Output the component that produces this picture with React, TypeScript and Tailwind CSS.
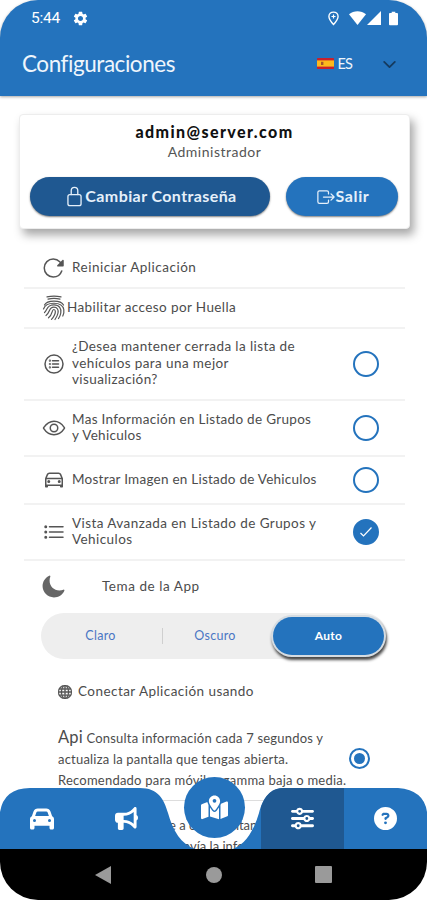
import type { ReactNode } from "react";
import {
    IoCarOutline,
    IoChevronDown,
    IoExitOutline,
    IoEyeOutline,
    IoListCircleOutline,
    IoListOutline,
    IoLockClosedOutline,
    IoMoon,
    IoReload,
} from "react-icons/io5";
import {
    FaBullhorn,
    FaCar,
    FaCircleQuestion,
    FaMapLocationDot,
    FaSliders,
} from "react-icons/fa6";
import { MdSettings } from "react-icons/md";
import { BsGlobe } from "react-icons/bs";

interface SettingRowProps {
    icon: ReactNode;
    lines: string[];
    height: string;
    textClass?: string;
    checked?: boolean;
}

const FingerprintIcon = () => (
    <svg
        viewBox="0 0 24 26"
        className="h-[26px] w-6"
        fill="none"
        stroke="currentColor"
        strokeWidth="1.2"
        strokeLinecap="round"
    >
        <path d="M5 1.8Q12 .6 19 1.8M6 4.2Q12 2.6 18 4.2" />
        <path d="M2.5 10C5 4.800 19 4.800 21.500 10" />
        <path d="M1.500 14C4 6.500 20 6 21.800 14.500C22.200 17 21.800 19 20.800 21" />
        <path d="M2.500 17.500C5.500 15 4.500 9.800 12 9.800C17.500 9.800 19.500 14 18.800 18C18.400 20.500 17.500 22 16.500 23.500" />
        <path d="M4 20.500C8.500 17.500 6.500 12.200 11.800 12.200C15.500 12.200 16.600 15 16 18C15.400 21 14.500 22.500 13 24.500" />
        <path d="M6.500 22.800C11 19.500 9.500 14.500 11.800 14.500C14 14.500 13.500 18 12.500 20C11.600 22 10.600 23.200 9.500 24.300" />
    </svg>
);

const CheckCircle = ({ checked }: { checked: boolean }) => (
    <div
        className={`flex h-[26px] w-[26px] shrink-0 items-center justify-center rounded-full border-2 border-[#2473bd] ${
            checked ? "bg-[#2473bd]" : "bg-white"
        }`}
    >
        {checked && (
            <svg viewBox="0 0 14 12" className="h-3 w-3.5" fill="none">
                <path d="M1.5 7 4.5 10 12.5 1.5" stroke="#fff" strokeWidth="1.2" />
            </svg>
        )}
    </div>
);

const SettingRow = ({
    icon,
    lines,
    height,
    textClass = "",
    checked,
}: SettingRowProps) => (
    <div
        className={`flex items-center border-b-2 border-[#f2f2f2] pl-[18px] pr-[26px] ${height}`}
    >
        <div className="flex w-[30px] shrink-0 items-center text-[#555]">
            {icon}
        </div>
        <div
            className={`flex-1 whitespace-nowrap pb-0.5 text-[13.5px] leading-[16.5px] ${textClass}`}
        >
            {lines.map((line) => (
                <div key={line}>{line}</div>
            ))}
        </div>
        {checked !== undefined && <CheckCircle checked={checked} />}
    </div>
);

const StatusBar = () => (
    <div className="flex h-9 items-center justify-between pl-[31px] pr-[29px] text-white">
        <div className="flex items-center gap-3">
            <span className="pt-0.5 font-[Roboto] text-[15.5px] tracking-[-0.2px]">
                5:44
            </span>
            <MdSettings size={17} />
        </div>
        <div className="flex items-center">
            <svg viewBox="0 0 12 16" className="mr-2.5 h-[15px] w-[11px]" fill="none">
                <path
                    d="M6 1C3.1 1 1 3.1 1 5.8 1 9.2 6 14.5 6 14.5S11 9.2 11 5.8C11 3.1 8.9 1 6 1Z"
                    stroke="#fff"
                    strokeWidth="1.5"
                />
                <path d="M6 3.6V8M3.8 5.8H8.2" stroke="#fff" strokeWidth="1.3" />
            </svg>
            <svg viewBox="0 0 17 14" className="h-3.5 w-[17px]" fill="#fff">
                <path d="M0 3.3C4.8-.9 12.2-.9 17 3.3L8.5 14Z" />
            </svg>
            <svg viewBox="0 0 14 14" className="ml-px h-3.5 w-3.5" fill="#fff">
                <path d="M14 0V14H0Z" />
            </svg>
            <svg viewBox="0 0 10 15" className="ml-2 h-[15px] w-[9px]" fill="#fff">
                <path d="M3 0H7V1.5H9Q10 1.5 10 2.5V14Q10 15 9 15H1Q0 15 0 14V2.5Q0 1.5 1 1.5H3Z" />
            </svg>
        </div>
    </div>
);

const SpainFlag = () => (
    <svg viewBox="0 0 17 11" className="mb-0.5 h-[11px] w-[17px]">
        <rect width="17" height="11" rx="0.8" fill="#c8202c" />
        <rect y="2.4" width="17" height="6.2" fill="#fcb91c" />
        <rect x="4" y="3.8" width="2.4" height="3.2" fill="#a5562a" />
    </svg>
);

const Header = () => (
    <header className="h-24 rounded-t-[38px] bg-[#2473bd] shadow-[0_1px_3px_rgba(0,0,0,0.35)]">
        <StatusBar />
        <div className="flex h-14 items-center pl-[22px] pr-7">
            <h1 className="flex-1 text-[22.5px] tracking-[-0.45px] text-[#eef5fc]">
                Configuraciones
            </h1>
            <SpainFlag />
            <span className="ml-1 text-[14.5px] tracking-[-0.9px] text-[#eef5fc]">
                ES
            </span>
            <IoChevronDown size={19} className="ml-7 text-[#153a5e]" />
        </div>
    </header>
);

const AccountCard = () => (
    <section className="ml-[19px] mt-[18px] flex h-[115px] w-[391px] flex-col items-center rounded-[4px] border border-[#ededed] bg-white pt-1.5 shadow-[4px_6px_10px_rgba(0,0,0,0.35)]">
        <div className="text-[16px] font-black leading-[22px] tracking-[1.4px] text-[#111]">
            admin@server.com
        </div>
        <div className="text-[14px] leading-[18px] tracking-[0.5px] text-[#555]">
            Administrador
        </div>
        <div className="mr-0.5 mt-4 flex gap-4">
            <button
                type="button"
                className="flex h-[39px] w-[240px] items-center justify-center rounded-full bg-[#1f5891] pb-0.5 pl-0.5 text-[16px] font-bold tracking-[0.4px] text-[#e6f0fa] shadow-[0_1px_2px_rgba(0,0,0,0.5)]"
            >
                <IoLockClosedOutline size={21} className="mt-0.5" />
                Cambiar Contraseña
            </button>
            <button
                type="button"
                className="flex h-[39px] w-[112px] items-center justify-center rounded-full bg-[#2473bd] pb-0.5 pl-0.5 text-[16px] font-bold tracking-[0.6px] text-[#e6f0fa] shadow-[0_1px_2px_rgba(0,0,0,0.5)]"
            >
                <IoExitOutline size={20} className="mt-0.5" />
                Salir
            </button>
        </div>
    </section>
);

const ThemePicker = () => (
    <section>
        <div className="flex h-[52px] items-center pb-0.5 pl-[41px]">
            <IoMoon size={25} className="text-[#666]" />
            <span className="ml-9 text-[13.5px] tracking-[0.55px]">Tema de la App</span>
        </div>
        <div className="ml-[41px] flex h-[46px] w-[346px] items-center rounded-full bg-[#eeeeee] text-[12.5px] tracking-[0.3px] text-[#4a76c4]">
            <div className="w-[119px] text-center">Claro</div>
            <div className="ml-0.5 h-4 w-px bg-[#cfcfcf]" />
            <div className="w-[104px] text-center">Oscuro</div>
            <div className="ml-[6px] flex h-[38px] w-[111px] items-center justify-center rounded-full bg-[#2473bd] text-[12px] font-bold text-white shadow-[0_0_0_2px_#d5dce2,1px_3px_3px_2px_rgba(0,0,0,0.7)]">
                Auto
            </div>
        </div>
    </section>
);

const ConnectionPicker = () => (
    <section className="pl-[58px]">
        <div className="flex h-[66px] items-center gap-1.5">
            <BsGlobe size={14} strokeWidth={0.5} />
            <span className="pb-0.5 text-[13.5px] tracking-[0.45px]">
                Conectar Aplicación usando
            </span>
        </div>
        <div className="flex h-[66px] items-center">
            <div className="w-[291px] whitespace-nowrap pt-0.5 text-[13px] leading-[21px]">
                <div className="tracking-[0.2px]">
                    <span className="text-[16.5px]">Api</span> Consulta información cada 7
                    segundos y
                </div>
                <div className="tracking-[0.2px]">
                    actualiza la pantalla que tengas abierta.
                </div>
                <div className="tracking-[0.22px]">
                    Recomendado para móviles gamma baja o media.
                </div>
            </div>
            <div className="flex h-[21px] w-[21px] items-center justify-center rounded-full border-2 border-[#2473bd]">
                <div className="h-[11px] w-[11px] rounded-full bg-[#2473bd]" />
            </div>
        </div>
        <div className="mr-[22px] mt-[9px] whitespace-nowrap border-t border-[#ddd] pt-[14px] text-[13px] leading-[21px]">
            <div className="pl-[111px]">e a cada ventana</div>
            <div className="pl-[118px]">envía la información</div>
        </div>
    </section>
);

const TabBar = () => (
    <nav className="absolute inset-x-0 bottom-[51px] h-[61px] text-white">
        {/* bar outline with the notch around the round map button */}
        <svg viewBox="0 0 427 61" className="absolute inset-0 h-[61px] w-full">
            <path
                d="M0 61V24Q4 0 30 0H140C158 0 164 11 168 25C173 43 181 56 195 61H233C246 56 254 42 259 25C263 10 270 0 284 0H398Q424 2 427 24V61Z"
                fill="#2473bd"
            />
            <path
                d="M261 61V19C265 7 272 0 284 0H344V61Z"
                fill="#1f5891"
            />
        </svg>
        <div className="relative flex h-full items-center">
            <FaCar size={24} className="ml-[30px]" />
            <FaBullhorn size={23} className="ml-[61px]" />
            <FaSliders size={23} className="ml-[153px]" />
            <FaCircleQuestion size={23} className="ml-[60px]" />
        </div>
        <div className="absolute -top-[11px] left-[184px] flex h-[61px] w-[61px] items-center justify-center rounded-full bg-[#2473bd]">
            <FaMapLocationDot size={27} />
        </div>
    </nav>
);

const AndroidNav = () => (
    <div className="absolute inset-x-0 bottom-0 flex h-[51px] items-center rounded-b-[38px] bg-black pl-[95px]">
        <svg viewBox="0 0 16 18" className="h-[18px] w-4" fill="#9a9a9a">
            <path d="M16 0V18L0 9Z" />
        </svg>
        <div className="ml-[95px] h-4 w-4 rounded-full bg-[#9a9a9a]" />
        <div className="ml-[93px] h-[17px] w-[17px] rounded-[1px] bg-[#9a9a9a]" />
    </div>
);

const App = () => (
    <div className="relative h-[900px] w-[427px] overflow-hidden bg-white font-[Lato,sans-serif] text-[#4c4c4c]">
        <Header />
        <AccountCard />
        <main className="ml-6 mt-5 w-[381px]">
            <SettingRow
                icon={<IoReload size={24} />}
                lines={["Reiniciar Aplicación"]}
                height="h-10"
                textClass="tracking-[0.5px]"
            />
            <SettingRow
                icon={<FingerprintIcon />}
                lines={["Habilitar acceso por Huella"]}
                height="h-10"
                textClass="-ml-[5px] tracking-[0.4px]"
            />
            <SettingRow
                icon={<IoListCircleOutline size={24} />}
                lines={[
                    "¿Desea mantener cerrada la lista de",
                    "vehículos para una mejor",
                    "visualización?",
                ]}
                height="h-[72px]"
                textClass="tracking-[0.4px]"
                checked={false}
            />
            <SettingRow
                icon={<IoEyeOutline size={24} />}
                lines={["Mas Información en Listado de Grupos", "y Vehiculos"]}
                height="h-14"
                textClass="tracking-[0.3px]"
                checked={false}
            />
            <SettingRow
                icon={<IoCarOutline size={24} />}
                lines={["Mostrar Imagen en Listado de Vehiculos"]}
                height="h-12"
                textClass="tracking-[0.24px]"
                checked={false}
            />
            <SettingRow
                icon={<IoListOutline size={24} />}
                lines={["Vista Avanzada en Listado de Grupos y", "Vehiculos"]}
                height="h-14"
                textClass="tracking-[0.42px]"
                checked
            />
        </main>
        <ThemePicker />
        <ConnectionPicker />
        <TabBar />
        <AndroidNav />
    </div>
);

export default App;
